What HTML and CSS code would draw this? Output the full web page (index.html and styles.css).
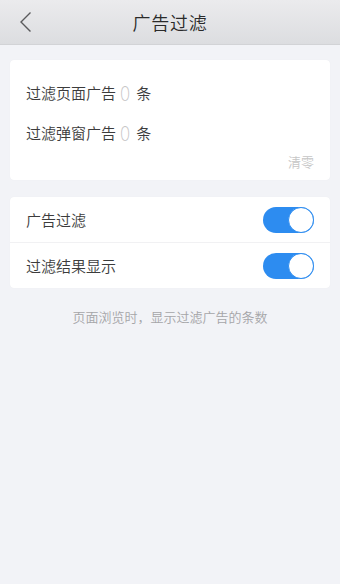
FILE: index.html
```html
<!DOCTYPE html>
<html lang="zh">
<head>
<meta charset="utf-8">
<link rel="stylesheet" href="styles.css">
</head>
<body>
<header class="nav">
  <span class="back"><svg width="14" height="22" viewBox="0 0 14 22"><path d="M11.5 1.5 L2 11 L11.5 20.5" fill="none" stroke="#5a5a5c" stroke-width="1.4"/></svg></span>
  <h1 class="title">广告过滤</h1>
</header>
<main class="content">
  <section class="card stats">
    <div class="stat">过滤页面广告<span class="num">0</span>条</div>
    <div class="stat">过滤弹窗广告<span class="num">0</span>条</div>
    <div class="clear">清零</div>
  </section>
  <section class="card list">
    <div class="row"><span>广告过滤</span><span class="switch"><span class="knob"></span></span></div>
    <div class="row"><span>过滤结果显示</span><span class="switch"><span class="knob"></span></span></div>
  </section>
  <p class="hint">页面浏览时，显示过滤广告的条数</p>
</main>
</body>
</html>
```
FILE: styles.css
```css
html, body { margin: 0; padding: 0; }
body {
  width: 340px; height: 584px; overflow: hidden;
  background: #f2f3f7;
  font-family: "Noto Sans CJK SC", "Noto Sans", sans-serif;
  color: #333;
}
.nav {
  height: 44px;
  background: linear-gradient(#ebebed, #dcdde0);
  border-bottom: 1px solid #d2d3d6;
  display: flex; align-items: center; justify-content: center;
  position: relative;
}
.back { position: absolute; left: 19px; top: 11px; display: flex; }
.title { margin: 0; font-size: 18px; font-weight: 350; color: #2a2a2a; letter-spacing: 0.8px; }
.content { padding: 15px 10px 0; display: flex; flex-direction: column; }
.card { background: #fff; border-radius: 4px; box-shadow: 0 0 1px rgba(0,0,0,0.06); }
.stats { height: 120px; box-sizing: border-box; padding: 22px 16px 0; position: relative; }
.stat { font-size: 15px; line-height: 22px; height: 40px; display: flex; align-items: flex-start; color: #3c3c3c; font-weight: 350; }
.num { font-family: "Lato", sans-serif; font-weight: 300; font-size: 21px; color: #c4c4c4; margin: 0 5px 0 3px; line-height: 22px; transform: scaleX(0.75); }
.clear { position: absolute; right: 16px; top: 92px; font-size: 13px; color: #c6c6c6; font-weight: 350; }
.list { margin-top: 17px; }
.row {
  height: 45px; display: flex; align-items: center; justify-content: space-between;
  padding: 0 16px; font-size: 15px; color: #3c3c3c; font-weight: 350;
}
.row + .row { border-top: 1px solid #f1f1f3; }
.switch {
  width: 51px; height: 26px; border-radius: 13px; background: #2d8cf0;
  box-sizing: border-box; display: flex; justify-content: flex-end; align-items: center;
}
.knob { width: 26px; height: 26px; border-radius: 50%; background: #fff; border: 1.5px solid #2d8cf0; box-sizing: border-box; }
.hint { margin: 19px 0 0; text-align: center; font-size: 13px; color: #a5a5a8; font-weight: 350; }
```
